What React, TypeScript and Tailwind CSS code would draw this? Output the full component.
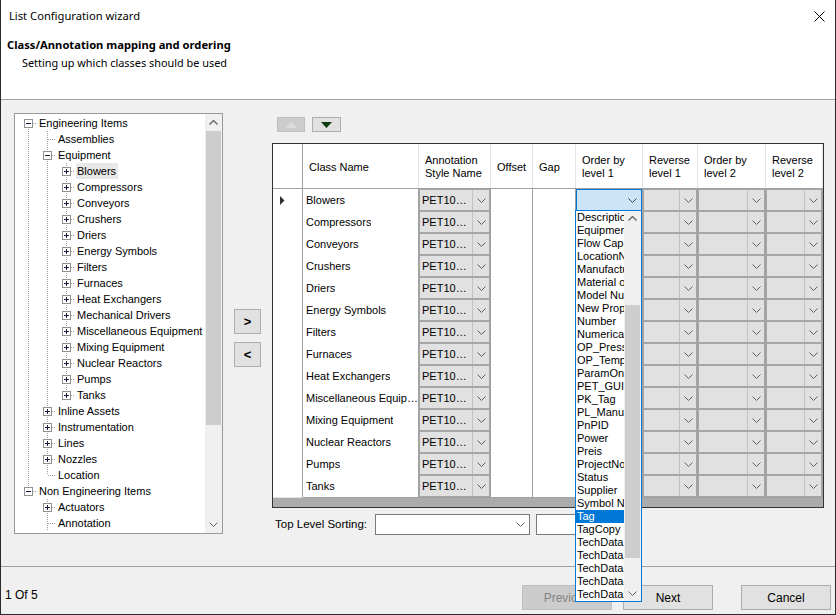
import React from "react"

type TreeRow = {
  text: string
  level: number
  box?: "plus" | "minus"
  first?: boolean
  last?: boolean
  selected?: boolean
}

const treeRows: TreeRow[] = [
  { text: "Engineering Items", level: 0, box: "minus", first: true },
  { text: "Assemblies", level: 1 },
  { text: "Equipment", level: 1, box: "minus" },
  { text: "Blowers", level: 2, box: "plus", selected: true },
  { text: "Compressors", level: 2, box: "plus" },
  { text: "Conveyors", level: 2, box: "plus" },
  { text: "Crushers", level: 2, box: "plus" },
  { text: "Driers", level: 2, box: "plus" },
  { text: "Energy Symbols", level: 2, box: "plus" },
  { text: "Filters", level: 2, box: "plus" },
  { text: "Furnaces", level: 2, box: "plus" },
  { text: "Heat Exchangers", level: 2, box: "plus" },
  { text: "Mechanical Drivers", level: 2, box: "plus" },
  { text: "Miscellaneous Equipment", level: 2, box: "plus" },
  { text: "Mixing Equipment", level: 2, box: "plus" },
  { text: "Nuclear Reactors", level: 2, box: "plus" },
  { text: "Pumps", level: 2, box: "plus" },
  { text: "Tanks", level: 2, box: "plus", last: true },
  { text: "Inline Assets", level: 1, box: "plus" },
  { text: "Instrumentation", level: 1, box: "plus" },
  { text: "Lines", level: 1, box: "plus" },
  { text: "Nozzles", level: 1, box: "plus" },
  { text: "Location", level: 1, last: true },
  { text: "Non Engineering Items", level: 0, box: "minus", last: true },
  { text: "Actuators", level: 1, box: "plus" },
  { text: "Annotation", level: 1 },
]

const classRows = [
  "Blowers",
  "Compressors",
  "Conveyors",
  "Crushers",
  "Driers",
  "Energy Symbols",
  "Filters",
  "Furnaces",
  "Heat Exchangers",
  "Miscellaneous Equipment",
  "Mixing Equipment",
  "Nuclear Reactors",
  "Pumps",
  "Tanks",
]

const headers = [
  "",
  "Class Name",
  "Annotation\nStyle Name",
  "Offset",
  "Gap",
  "Order by\nlevel 1",
  "Reverse\nlevel 1",
  "Order by\nlevel 2",
  "Reverse\nlevel 2",
]

const properties = [
  "Description",
  "Equipment Type",
  "Flow Capacity",
  "LocationName",
  "Manufacturer",
  "Material of Construction",
  "Model Number",
  "New Property",
  "Number",
  "NumericalValue",
  "OP_Pressure",
  "OP_Temperature",
  "ParamOnly",
  "PET_GUID",
  "PK_Tag",
  "PL_ManualTag",
  "PnPID",
  "Power",
  "Preis",
  "ProjectNo",
  "Status",
  "Supplier",
  "Symbol Name",
  "Tag",
  "TagCopy",
  "TechData1",
  "TechData2",
  "TechData3",
  "TechData4",
  "TechData5",
]

const gridCols = "grid grid-cols-[30px_116px_72px_42px_43px_67px_55px_68px_57px]"

function ChevronDown({ color = "#606060" }: { color?: string }) {
  return (
    <svg width="9" height="5" className="shrink-0">
      <polyline points="0.5,0.5 4.5,4.5 8.5,0.5" fill="none" stroke={color} strokeWidth="1" />
    </svg>
  )
}

function ChevronUp({ color = "#606060" }: { color?: string }) {
  return (
    <svg width="9" height="5" className="shrink-0">
      <polyline points="0.5,4.5 4.5,0.5 8.5,4.5" fill="none" stroke={color} strokeWidth="1.3" />
    </svg>
  )
}

function GuideCell({ on }: { on: boolean }) {
  return (
    <svg width="19" height="16" className="shrink-0">
      {on && <line x1="10.5" y1="0" x2="10.5" y2="16" stroke="#a0a0a0" strokeDasharray="1 1" />}
    </svg>
  )
}

function NodeCell({ row }: { row: TreeRow }) {
  return (
    <svg width="19" height="16" className="shrink-0">
      {!row.first && <line x1="10.5" y1="0" x2="10.5" y2="8" stroke="#a0a0a0" strokeDasharray="1 1" />}
      {!row.last && <line x1="10.5" y1="8" x2="10.5" y2="16" stroke="#a0a0a0" strokeDasharray="1 1" />}
      <line x1="11" y1="8.5" x2="19" y2="8.5" stroke="#a0a0a0" strokeDasharray="1 1" />
      {row.box && (
        <>
          <rect x="6.5" y="4.5" width="8" height="8" fill="#fff" stroke="#919191" />
          <line x1="8" y1="8.5" x2="13" y2="8.5" stroke="#1c1c3c" />
          {row.box === "plus" && <line x1="10.5" y1="6" x2="10.5" y2="11" stroke="#1c1c3c" />}
        </>
      )}
    </svg>
  )
}

function Tree() {
  const lastStack: boolean[] = []
  const rows = treeRows.map((row) => {
    const guides = lastStack.slice(0, row.level).map((l) => !l)
    lastStack[row.level] = !!row.last
    lastStack.length = row.level + 1
    return { ...row, guides }
  })

  return (
    <div className="ml-[13px] mt-[13px] flex h-[421px] w-[209px] shrink-0 border border-[#9a9a9a] bg-white">
      <div className="min-w-0 flex-1 overflow-hidden pl-[3px] pt-px">
        {rows.map((row) => (
          <div key={row.text} className="flex h-4 items-center whitespace-nowrap">
            {row.guides.map((on, k) => (
              <GuideCell key={k} on={on} />
            ))}
            <NodeCell row={row} />
            <span className={`ml-px pl-px pr-[2px] leading-4 ${row.selected ? "bg-[#e8e8e8]" : ""}`}>
              {row.text}
            </span>
          </div>
        ))}
      </div>
      <div className="flex w-[17px] shrink-0 flex-col bg-[#f0f0f0]">
        <div className="flex h-[17px] items-center justify-center">
          <ChevronUp />
        </div>
        <div className="mx-px h-[294px] bg-[#cdcdcd]" />
        <div className="flex-1" />
        <div className="flex h-[17px] items-center justify-center">
          <ChevronDown />
        </div>
      </div>
    </div>
  )
}

function ComboCell({ text = "" }: { text?: string }) {
  return (
    <div className="border-b border-r border-[#a0a0a0] bg-white">
      <div className="flex h-full border border-[#a6a6a6] bg-[#e1e1e1]">
        <span className="flex-1 overflow-hidden whitespace-nowrap pl-[2px] pt-px leading-[19px]">{text}</span>
        <span className="flex w-[17px] items-center justify-center border-l border-[#c2c2c2]">
          <ChevronDown />
        </span>
      </div>
    </div>
  )
}

function Grid() {
  return (
    <div className="mt-[11px] flex h-[365px] w-[552px] flex-col border border-[#333] bg-[#ababab]">
      <div className={`${gridCols} h-[45px] shrink-0 border-b border-[#a0a0a0] bg-white`}>
        {headers.map((h, i) => (
          <div
            key={i}
            className={`flex items-center whitespace-pre-line pl-[6px] pt-[2px] leading-[13px] ${
              i === 0 ? "border-r border-[#a0a0a0]" : "border-r border-[#e3e3e3]"
            }`}
          >
            {h}
          </div>
        ))}
      </div>
      {classRows.map((name, i) => (
        <div key={name} className={`${gridCols} h-[22px] shrink-0`}>
          <div className="flex items-center border-b border-r border-b-[#e3e3e3] border-r-[#a0a0a0] bg-white pl-[7px]">
            {i === 0 && (
              <svg width="5" height="9">
                <polygon points="0,0 4.5,4.5 0,9" fill="#303030" />
              </svg>
            )}
          </div>
          <div className="flex items-center overflow-hidden border-b border-r border-[#a0a0a0] bg-white pl-[3px] pt-px">
            <span className="truncate">{name}</span>
          </div>
          <ComboCell text="PET10…" />
          <div className="border-b border-r border-[#a0a0a0] bg-white" />
          <div className="border-b border-r border-[#a0a0a0] bg-white" />
          {i === 0 ? (
            <div className="border-b border-r border-[#a0a0a0] bg-white">
              <div className="flex h-full items-center justify-end border border-[#0078d7] bg-[#cce4f7] pr-[4px]">
                <ChevronDown color="#404040" />
              </div>
            </div>
          ) : (
            <ComboCell />
          )}
          <ComboCell />
          <ComboCell />
          <ComboCell />
        </div>
      ))}
    </div>
  )
}

function PropertyList() {
  return (
    <div className="absolute left-[574px] top-[210px] flex h-[392px] w-[67px] border border-[#0078d7] bg-white">
      <div className="min-w-0 flex-1 overflow-hidden">
        {properties.map((p) => (
          <div
            key={p}
            className={`h-[13px] whitespace-nowrap pl-px leading-[13px] ${p === "Tag" ? "bg-[#0078d7] text-white" : ""}`}
          >
            {p}
          </div>
        ))}
      </div>
      <div className="flex w-[17px] shrink-0 flex-col bg-[#f0f0f0]">
        <div className="flex h-[15px] items-center justify-center">
          <ChevronUp />
        </div>
        <div className="h-[79px]" />
        <div className="mx-px h-[253px] bg-[#cdcdcd]" />
        <div className="flex-1" />
        <div className="flex h-[15px] items-center justify-center">
          <ChevronDown />
        </div>
      </div>
    </div>
  )
}

export default function App() {
  return (
    <div className="relative flex h-[615px] w-[836px] flex-col overflow-hidden border-x border-b border-[#2b2b2b] bg-[#f0f0f0] font-['Liberation_Sans',Arial,sans-serif] text-[11px] text-black">
      <header className="h-[100px] shrink-0 border-b border-[#a0a0a0] bg-white font-['Noto_Sans',sans-serif] text-[11.2px]">
        <div className="flex h-[32px] items-center justify-between pl-2 pr-[10px]">
          <span>List Configuration wizard</span>
          <svg width="11" height="11">
            <path d="M0.5 0.5 L10.5 10.5 M10.5 0.5 L0.5 10.5" stroke="#000" strokeWidth="1" />
          </svg>
        </div>
        <div className="mt-[5px] pl-[6px] font-bold leading-4">Class/Annotation mapping and ordering</div>
        <div className="mt-[2px] pl-[21px] text-[10.9px] leading-4">Setting up which classes should be used</div>
      </header>

      <main className="flex h-[466px] shrink-0">
        <Tree />

        <div className="ml-[11px] mt-[209px] flex w-[27px] shrink-0 flex-col gap-[8px]">
          <button className="flex h-[25px] items-center justify-center border border-[#adadad] bg-[#e1e1e1] text-[13px] font-bold">
            &gt;
          </button>
          <button className="flex h-[25px] items-center justify-center border border-[#adadad] bg-[#e1e1e1] text-[13px] font-bold">
            &lt;
          </button>
        </div>

        <div className="ml-[11px] flex flex-col">
          <div className="ml-[5px] mt-[17px] flex gap-[7px]">
            <button className="flex h-[15px] w-[28px] items-center justify-center border border-[#bfbfbf] bg-[#cccccc]">
              <svg width="11" height="6">
                <polygon points="0,6 5.5,0 11,6" fill="#dcdcdc" />
              </svg>
            </button>
            <button className="flex h-[15px] w-[29px] items-center justify-center border border-[#adadad] bg-[#e1e1e1]">
              <svg width="11" height="6">
                <polygon points="0,0 11,0 5.5,6" fill="#0f3b12" />
              </svg>
            </button>
          </div>

          <Grid />

          <div className="mt-[6px] flex h-[21px] items-center">
            <span className="ml-[3px] w-[100px] text-[11.5px]">Top Level Sorting:</span>
            <div className="flex h-[21px] w-[155px] items-center justify-end border border-[#7a7a7a] bg-white pr-[4px]">
              <ChevronDown />
            </div>
            <div className="ml-[6px] h-[21px] w-[90px] border border-[#7a7a7a] bg-white" />
          </div>
        </div>
      </main>

      <footer className="flex h-[48px] shrink-0 items-start border-t border-[#a0a0a0] text-[12px]">
        <span className="mt-[21px] pl-[4px] leading-[14px]">1 Of 5</span>
        <div className="ml-auto mr-[4px] mt-[18px] flex">
          <button className="h-[25px] w-[90px] border border-[#bfbfbf] bg-[#cccccc] text-[#838383]">Previous</button>
          <button className="ml-[11px] h-[25px] w-[90px] border border-[#adadad] bg-[#e1e1e1]">Next</button>
          <button className="ml-[28px] h-[25px] w-[90px] border border-[#adadad] bg-[#e1e1e1]">Cancel</button>
        </div>
      </footer>

      <PropertyList />
    </div>
  )
}
